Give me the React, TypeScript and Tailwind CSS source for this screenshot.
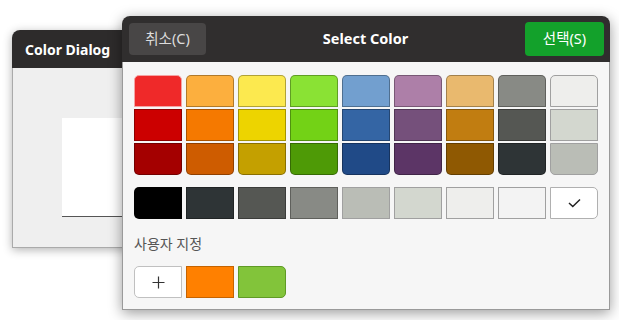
import React from 'react';

const columns: string[][] = [
  ['#ef2929', '#cc0000', '#a40000'],
  ['#fcaf3e', '#f57900', '#ce5c00'],
  ['#fce94f', '#edd400', '#c4a000'],
  ['#8ae234', '#73d216', '#4e9a06'],
  ['#729fcf', '#3465a4', '#204a87'],
  ['#ad7fa8', '#75507b', '#5c3566'],
  ['#e9b96e', '#c17d11', '#8f5902'],
  ['#888a85', '#555753', '#2e3436'],
  ['#eeeeec', '#d3d7cf', '#babdb6'],
];

const grays = ['#000000', '#2e3436', '#555753', '#888a85', '#babdb6', '#d3d7cf', '#eeeeec', '#f3f3f3'];

const font = { fontFamily: '"Noto Sans", "Noto Sans CJK KR", sans-serif' };

function BackWindow() {
  return (
    <div className="absolute left-[12px] top-[30px] w-[300px] h-[218px] rounded-t-[8px] shadow-[0_2px_10px_rgba(0,0,0,0.3)] flex flex-col overflow-hidden">
      <div className="h-[38px] bg-[#2d2b2b] flex items-center pl-[13px] text-white text-[14px] font-bold">
        Color Dialog
      </div>
      <div className="flex-1 bg-[#efefef] border-l border-b border-[#aaaaaa] pt-[50px] pl-[49px]">
        <div className="w-[120px] h-[99px] bg-white border-b border-[#555555]" />
      </div>
    </div>
  );
}

function Swatch({ color, className }: { color: string; className: string }) {
  return <div className={'h-[32px] w-[48px] border ' + className} style={{ backgroundColor: color }} />;
}

export default function App() {
  return (
    <div className="relative w-[619px] h-[320px] bg-white overflow-hidden" style={font}>
      <BackWindow />

      <div className="absolute left-[122px] top-[16px] w-[488px] h-[294px] rounded-t-[8px] shadow-[0_3px_14px_rgba(0,0,0,0.4)] flex flex-col overflow-hidden">
        {/* header bar */}
        <div className="h-[46px] bg-[#302e2e] flex items-center justify-between px-[7px]">
          <button className="h-[32px] w-[77px] rounded-[4px] bg-[#484646] text-[#dcdcdc] text-[14.5px]">
            취소(C)
          </button>
          <div className="text-white text-[14.5px] font-bold">Select Color</div>
          <button className="h-[34px] w-[79px] rounded-[4px] bg-[#13a12b] text-white text-[14.5px] -mr-[1px]">
            선택(S)
          </button>
        </div>

        {/* body */}
        <div className="flex-1 bg-[#f6f6f6] border border-t-0 border-[#9a9a9a] pt-[13px] pl-[11px] pr-[11px]">
          <div className="flex gap-[4px]">
            {columns.map((col, i) => (
              <div key={i} className="flex flex-col gap-[2px]">
                {col.map((c, j) => (
                  <Swatch
                    key={j}
                    color={c}
                    className={
                      (j === 0 ? 'rounded-t-[5px] ' : j === 2 ? 'rounded-b-[5px] ' : '') +
                      (i === 0 && j === 0
                        ? 'border-[#f5a3a3]'
                        : i === 8
                        ? 'border-[#a0a0a0]'
                        : 'border-black/30')
                    }
                  />
                ))}
              </div>
            ))}
          </div>

          <div className="flex gap-[4px] mt-[12px]">
            {grays.map((c, i) => (
              <Swatch
                key={c}
                color={c}
                className={(i === 0 ? 'rounded-l-[5px] ' : '') + (i > 3 ? 'border-[#a0a0a0]' : 'border-black/30')}
              />
            ))}
            <div className="h-[32px] w-[48px] rounded-r-[5px] border border-[#b0b0b0] bg-white flex items-center justify-center">
              <svg width="13" height="10" viewBox="0 0 13 10" fill="none">
                <path d="M1 5 L4.8 8.5 L12 1.5" stroke="#222" strokeWidth="1.5" />
              </svg>
            </div>
          </div>

          <div className="mt-[14px] h-[21px] flex items-center text-[14px] text-[#555555]">사용자 지정</div>

          <div className="flex gap-[4px] mt-[12px]">
            <div className="h-[32px] w-[48px] rounded-l-[5px] border border-[#c0c0c0] bg-white flex items-center justify-center">
              <svg width="13" height="13" viewBox="0 0 13 13" fill="none">
                <path d="M6.5 0.5 V12.5 M0.5 6.5 H12.5" stroke="#333" strokeWidth="1.2" />
              </svg>
            </div>
            <Swatch color="#ff8000" className="border-[#c56300]" />
            <Swatch color="#82c43a" className="rounded-r-[5px] border-[#5f9a25]" />
          </div>
        </div>
      </div>
    </div>
  );
}
